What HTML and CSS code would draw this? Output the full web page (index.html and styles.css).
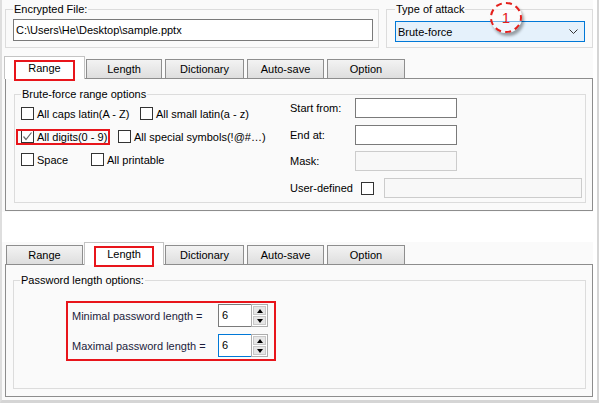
FILE: index.html
```html
<!DOCTYPE html>
<html lang="en">
<head>
    <meta charset="UTF-8">
    <title>Brute-force attack settings</title>
    <link rel="stylesheet" href="styles.css">
</head>
<body>
<div class="window">

    <!-- top capture: Range tab -->
    <div class="shot shot-top">
        <div class="head">
            <fieldset class="group file-group">
                <legend>Encrypted File:</legend>
                <div class="textbox">C:\Users\He\Desktop\sample.pptx</div>
            </fieldset>
            <fieldset class="group attack-group">
                <legend>Type of attack</legend>
                <div class="combo">
                    <span>Brute-force</span>
                    <svg width="9" height="5" viewBox="0 0 9 5"><polyline points="0.5,0.5 4.5,4.5 8.5,0.5" fill="none" stroke="#333" stroke-width="1"/></svg>
                </div>
            </fieldset>
        </div>
        <div class="callout">1</div>

        <div class="tabs">
            <span class="tab t-range on mark">Range</span>
            <span class="tab t-length">Length</span>
            <span class="tab t-dict">Dictionary</span>
            <span class="tab t-auto">Auto-save</span>
            <span class="tab t-option">Option</span>
        </div>
        <div class="panel panel-range">
            <fieldset class="group range-group">
                <legend>Brute-force range options</legend>
                <div class="range-body">
                    <div class="checks">
                        <div class="check-row">
                            <label class="check c-caps"><span class="box"></span>All caps latin(A - Z)</label>
                            <label class="check"><span class="box"></span>All small latin(a - z)</label>
                        </div>
                        <div class="check-row">
                            <label class="check c-digits"><span class="box"><svg width="11" height="11" viewBox="0 0 11 11"><polyline points="1.5,5.5 4,8.5 9.5,1.5" fill="none" stroke="#666" stroke-width="1.2"/></svg></span>All digits(0 - 9)</label>
                            <label class="check"><span class="box"></span>All special symbols(!@#…)</label>
                        </div>
                        <div class="check-row">
                            <label class="check c-space"><span class="box"></span>Space</label>
                            <label class="check"><span class="box"></span>All printable</label>
                        </div>
                    </div>
                    <div class="fields">
                        <div class="field-row">
                            <span class="lbl">Start from:</span>
                            <span class="input"></span>
                        </div>
                        <div class="field-row">
                            <span class="lbl">End at:</span>
                            <span class="input"></span>
                        </div>
                        <div class="field-row">
                            <span class="lbl">Mask:</span>
                            <span class="input off"></span>
                        </div>
                        <div class="field-row">
                            <span class="lbl lbl-wide">User-defined</span>
                            <span class="box"></span>
                            <span class="input off input-wide"></span>
                        </div>
                    </div>
                </div>
            </fieldset>
        </div>
    </div>

    <!-- bottom capture: Length tab -->
    <div class="shot shot-bottom">
        <div class="tabs">
            <span class="tab t-range">Range</span>
            <span class="tab t-length on mark">Length</span>
            <span class="tab t-dict">Dictionary</span>
            <span class="tab t-auto">Auto-save</span>
            <span class="tab t-option">Option</span>
        </div>
        <div class="panel panel-length">
            <fieldset class="group length-group">
                <legend>Password length options:</legend>
                <div class="len-box">
                    <div class="len-row">
                        <span class="len-lbl">Minimal password length =</span>
                        <div class="spin">
                            <span class="spin-val">6</span>
                            <span class="spin-btns"><span class="spin-btn up"></span><span class="spin-btn down"></span></span>
                        </div>
                    </div>
                    <div class="len-row">
                        <span class="len-lbl">Maximal password length =</span>
                        <div class="spin">
                            <span class="spin-val focus">6</span>
                            <span class="spin-btns"><span class="spin-btn up"></span><span class="spin-btn down"></span></span>
                        </div>
                    </div>
                </div>
            </fieldset>
        </div>
    </div>

</div>
</body>
</html>
```

FILE: styles.css
```css
* {
    box-sizing: border-box;
}

body {
    margin: 0;
    background: #fff;
    font-family: "Liberation Sans", Arial, sans-serif;
    font-size: 11px;
    color: #000;
}

.window {
    width: 599px;
    height: 403px;
    border-left: 2px solid #dedede;
    border-right: 2px solid #d5d5d5;
    border-bottom: 3px solid #d5d5d5;
}

.shot {
    width: 591px;
    background: #fafafa;
}

.shot-top {
    position: relative;
    padding-bottom: 1px;
}

.shot-bottom {
    margin-top: 30px;
    padding-bottom: 3px;
}

/* group boxes */
.group {
    margin: 0;
    min-width: 0;
    border: 1px solid #dcdcdc;
}

.group legend {
    padding: 0 1px;
    line-height: 14px;
}

.head {
    display: flex;
    height: 48px;
    padding: 2px 0 0 3px;
}

.file-group {
    width: 374px;
    padding: 0 5px 5px 7px;
}

.attack-group {
    width: 207px;
    margin-left: 7px;
    padding: 0 7px 5px 8px;
}

.textbox {
    height: 22px;
    margin-top: 3px;
    padding-left: 2px;
    line-height: 20px;
    border: 1px solid #7a7a7a;
    background: #fff;
}

.combo {
    display: flex;
    align-items: center;
    justify-content: space-between;
    height: 21px;
    margin-top: 5px;
    padding: 0 6px 0 2px;
    border: 1px solid #0078d7;
    background: #e5f1fb;
}

.callout {
    position: absolute;
    left: 488px;
    top: 2px;
    width: 32px;
    height: 31px;
    border: 2px dashed #e4201c;
    border-radius: 50%;
    background: rgba(255, 255, 255, 0.45);
    box-shadow: 2px 3px 3px rgba(0, 0, 0, 0.35);
    color: #e4201c;
    font-size: 15px;
    line-height: 27px;
    text-align: center;
}

/* tabs */
.tabs {
    display: flex;
    align-items: flex-end;
    gap: 3px;
    height: 22px;
    padding-left: 4px;
}

.shot-top .tabs {
    margin-top: 8px;
}

.tab {
    position: relative;
    box-sizing: content-box;
    height: 18px;
    line-height: 18px;
    text-align: center;
    border: 1px solid #8e8e8e;
    border-bottom: 0;
    background: linear-gradient(#f3f3f3, #dedede);
}

.t-range { width: 75px; }
.t-length { width: 74px; }
.t-dict { width: 77px; }
.t-auto { width: 75px; }
.t-option { width: 76px; }

.tab.on {
    height: 20px;
    padding: 2px 2px 0;
    margin: 0 -2px -1px;
    line-height: 19px;
    border-color: #c4c4c4;
    background: #fff;
    z-index: 1;
}

.tab.mark::after {
    content: "";
    position: absolute;
    left: 9px;
    right: 9px;
    top: 3px;
    bottom: -2px;
    border: 2px solid #e8151b;
}

.panel {
    display: flex;
    flex-direction: column;
    width: 588px;
    height: 133px;
    margin-left: 3px;
    padding: 8px 6px 8px 7px;
    border: 1px solid #8d8d8d;
}

.panel-range {
    padding-left: 8px;
}

.panel-length {
    padding-bottom: 7px;
}

.range-group,
.length-group {
    flex: 1;
    padding: 0 6px 4px 6px;
}

.range-group {
    padding-right: 2px;
}

/* range tab */
.range-body {
    display: flex;
}

.checks {
    flex-shrink: 0;
    width: 269px;
    padding-top: 1px;
}

.check-row {
    display: flex;
    align-items: center;
    height: 23px;
}

.check {
    display: flex;
    align-items: center;
}

.c-caps { width: 119px; }
.c-space { width: 70px; }

.c-digits {
    position: relative;
    width: 97px;
}

.c-digits::after {
    content: "";
    position: absolute;
    left: -5px;
    right: 8px;
    top: -1px;
    bottom: -2px;
    border: 2px solid #e8151b;
}

.box {
    display: flex;
    flex-shrink: 0;
    align-items: center;
    justify-content: center;
    width: 13px;
    height: 13px;
    margin-right: 3px;
    border: 1px solid #333;
    background: #fff;
}

.fields {
    display: flex;
    flex-direction: column;
    gap: 6.7px;
    margin-top: -3px;
}

.field-row {
    display: flex;
    align-items: center;
    height: 20px;
}

.lbl {
    width: 65px;
}

.lbl-wide {
    width: 71px;
}

.input {
    width: 102px;
    height: 20px;
    border: 1px solid #7a7a7a;
    background: #fff;
}

.input.off {
    border-color: #cccccc;
    background: #f8f8f8;
}

.input-wide {
    width: 198px;
    margin-left: 7px;
}

/* length tab */
.len-box {
    display: flex;
    flex-direction: column;
    gap: 7px;
    width: 210px;
    height: 60px;
    margin: 14px 0 0 46px;
    padding: 1px 0 0 4px;
    border: 2px solid #e8151b;
}

.len-row {
    display: flex;
    align-items: center;
    height: 23px;
}

.len-lbl {
    width: 146px;
    color: #1c1c3c;
}

.spin {
    display: flex;
    width: 50px;
    height: 23px;
}

.spin-val {
    width: 33px;
    padding-left: 3px;
    line-height: 21px;
    border: 1px solid #7a7a7a;
    border-right: 0;
    background: #fff;
}

.spin-val.focus {
    border-color: #0078d7;
}

.spin-btns {
    display: flex;
    flex-direction: column;
    gap: 1px;
    width: 17px;
    padding: 1px;
    border: 1px solid #adadad;
    background: #fff;
}

.spin-btn {
    display: flex;
    flex: 1;
    align-items: center;
    justify-content: center;
    border: 1px solid #c8c8c8;
    background: #e6e6e6;
}

.spin-btn::before {
    content: "";
    border-left: 3.5px solid transparent;
    border-right: 3.5px solid transparent;
}

.up::before {
    border-bottom: 4px solid #000;
}

.down::before {
    border-top: 4px solid #000;
}
```
